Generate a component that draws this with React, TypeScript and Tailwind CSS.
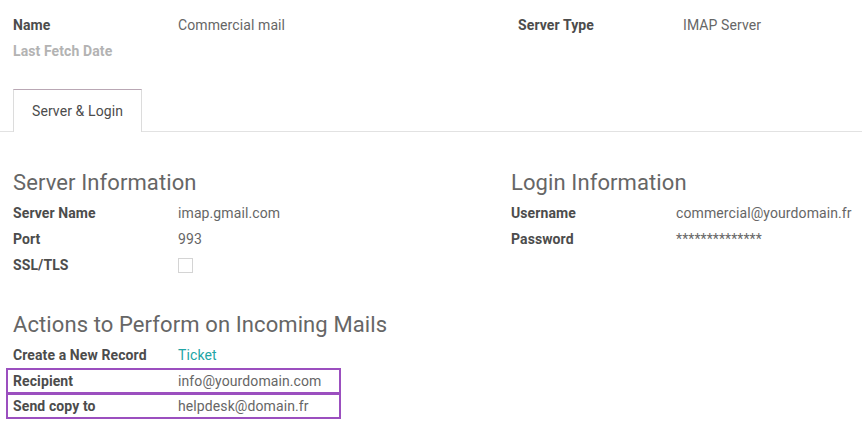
import type { ReactNode } from 'react'

interface FieldProps {
  label: string
  children?: ReactNode
  muted?: boolean
}

function Field({ label, children, muted }: FieldProps) {
  return (
    <div className="flex h-[26px] items-center">
      <div className={`w-[165px] shrink-0 font-bold ${muted ? 'text-[#b3b3b3]' : 'text-[#4c4c4c]'}`}>{label}</div>
      <div className="text-[#666666]">{children}</div>
    </div>
  )
}

function SectionTitle({ children }: { children: ReactNode }) {
  return <h2 className="h-[30px] text-[22px] leading-[30px] text-[#666666]">{children}</h2>
}

export default function App() {
  return (
    <div className="h-[432px] w-[862px] overflow-hidden bg-white text-[14px] leading-[20px] tracking-[0.1px]" style={{ fontFamily: 'Roboto, "Liberation Sans", sans-serif' }}>
      {/* header fields */}
      <div className="grid grid-cols-[518px_1fr] pt-[12px]">
        <div className="pl-[13px]">
          <Field label="Name">Commercial mail</Field>
          <Field label="Last Fetch Date" muted />
        </div>
        <div>
          <Field label="Server Type">IMAP Server</Field>
        </div>
      </div>

      {/* notebook tabs */}
      <div className="mt-[25px] flex border-b border-[#e2e2e2] pl-[13px]">
        <div className="-mb-px flex h-[43px] w-[129px] items-center justify-center border border-b-0 border-[#dcdcdc] border-t-[#b9a7b4] bg-white text-[#4c4c4c]">
          Server &amp; Login
        </div>
      </div>

      {/* tab content */}
      <div className="px-[13px] pt-[36px]">
        <div className="grid grid-cols-[498px_1fr]">
          <div>
            <SectionTitle>Server Information</SectionTitle>
            <div className="mt-[2px]">
              <Field label="Server Name">imap.gmail.com</Field>
              <Field label="Port">993</Field>
              <Field label="SSL/TLS">
                <div className="h-[15px] w-[15px] border border-[#d4d4d4] bg-white" />
              </Field>
            </div>
          </div>
          <div>
            <SectionTitle>Login Information</SectionTitle>
            <div className="mt-[2px]">
              <Field label="Username">commercial@yourdomain.fr</Field>
              <Field label="Password">**************</Field>
            </div>
          </div>
        </div>

        <div className="mt-[32px]">
          <SectionTitle>Actions to Perform on Incoming Mails</SectionTitle>
          <div className="mt-[2px]">
            <div className="flex h-[26px] items-center">
              <div className="w-[165px] shrink-0 font-bold text-[#4c4c4c]">Create a New Record</div>
              <div className="text-[#21a5a5]">Ticket</div>
            </div>
            <div className="-ml-[7px] flex h-[26px] w-[335px] items-center border-2 border-[#9b4fbf] pl-[5px]">
              <div className="w-[165px] shrink-0 font-bold text-[#4c4c4c]">Recipient</div>
              <div className="text-[#666666]">info@yourdomain.com</div>
            </div>
            <div className="-mt-px -ml-[7px] flex h-[26px] w-[335px] items-center border-2 border-[#9b4fbf] pl-[5px]">
              <div className="w-[165px] shrink-0 font-bold text-[#4c4c4c]">Send copy to</div>
              <div className="text-[#666666]">helpdesk@domain.fr</div>
            </div>
          </div>
        </div>
      </div>
    </div>
  )
}
